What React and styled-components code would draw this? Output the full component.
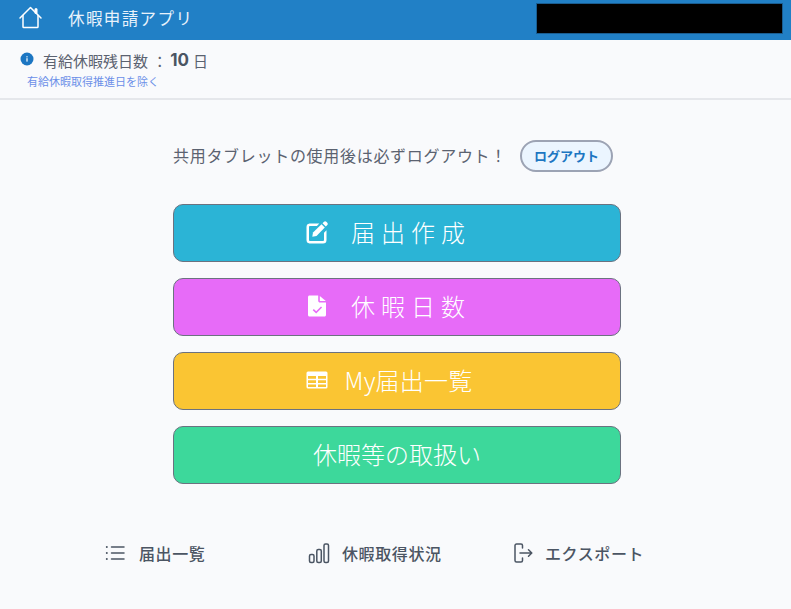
import React from 'react';
import styled, { createGlobalStyle } from 'styled-components';

const GlobalStyle = createGlobalStyle`
  html, body {
    margin: 0;
    padding: 0;
    height: 100%;
    background: #f9fafc;
  }
  body {
    font-family: "Inter", "Noto Sans CJK JP", sans-serif;
    color: #4b5563;
    overflow: hidden;
  }
`;

const Page = styled.div`
  width: 791px;
  height: 609px;
  display: flex;
  flex-direction: column;
`;

const Header = styled.header`
  height: 40px;
  flex: none;
  display: flex;
  align-items: center;
  justify-content: space-between;
  padding: 0 8px 0 18px;
  background: #2180c6;
  box-sizing: border-box;
`;

const Brand = styled.div`
  display: flex;
  align-items: center;
  gap: 25px;
  margin-top: -5px;
`;

const HomeIcon = styled.svg`
  width: 25px;
  height: 25px;
  flex: none;
`;

const Title = styled.span`
  font-size: 16.5px;
  letter-spacing: 1.4px;
  color: #e8f2fb;
`;

const MaskedField = styled.div`
  width: 247px;
  height: 31px;
  margin-top: -3px;
  box-sizing: border-box;
  background: #000;
  border: 1px solid #1a5d90;
`;

const InfoBar = styled.section`
  height: 60px;
  flex: none;
  box-sizing: border-box;
  padding: 10px 20px 0;
  border-bottom: 2px solid #e5e7eb;
`;

const InfoLine = styled.div`
  display: flex;
  align-items: center;
  height: 20px;
  font-size: 15px;
  color: #5b6270;
`;

const InfoIcon = styled.svg`
  width: 14px;
  height: 14px;
  margin-right: 9px;
  margin-top: -2px;
  flex: none;
`;

const Days = styled.strong`
  margin: 0 4px 0 3px;
  font-size: 17px;
  font-weight: 700;
  color: #4b5563;
`;

const InfoNote = styled.div`
  margin: 5px 0 0 7px;
  font-size: 11px;
  line-height: 14px;
  color: #6b8fe8;
`;

const Main = styled.main`
  width: 448px;
  margin: 0 0 0 173px;
  padding-top: 39px;
  display: flex;
  flex-direction: column;
`;

const LogoutRow = styled.div`
  display: flex;
  align-items: center;
  height: 33px;
  margin-bottom: 32px;
  font-size: 16px;
  color: #5b6270;
`;

const LogoutText = styled.span`
  width: 347px;
  flex: none;
  margin-top: -2px;
  letter-spacing: 0.7px;
  white-space: nowrap;
`;

const LogoutButton = styled.button`
  width: 93px;
  height: 32px;
  padding: 0;
  border: 2px solid #9ca3b4;
  border-radius: 16px;
  background: #ebf5ff;
  color: #1c76c2;
  font-family: inherit;
  font-size: 13px;
  font-weight: 700;
`;

const ActionList = styled.div`
  display: flex;
  flex-direction: column;
  gap: 16px;
`;

const ActionButton = styled.button`
  height: 58px;
  box-sizing: border-box;
  display: flex;
  align-items: center;
  justify-content: center;
  gap: ${p => p.$gap}px;
  padding: 0 ${p => p.$shift}px 0 0;
  border: 1px solid #6b7280;
  border-radius: 10px;
  background: ${p => p.$color};
  color: #fff;
  font-family: "Noto Sans CJK JP", sans-serif;
  font-size: 24px;
  font-weight: 300;
  line-height: 34px;
  letter-spacing: ${p => p.$spacing}px;
  white-space: nowrap;
`;

const ActionLabel = styled.span`
  margin-top: -2px;
`;

const ActionIcon = styled.svg`
  width: 24px;
  height: 24px;
  flex: none;
  margin-top: -3px;
`;

const BottomNav = styled.nav`
  width: 560px;
  margin: 57px 0 0 103px;
  display: flex;
`;

const NavItem = styled.a`
  display: flex;
  align-items: center;
  height: 24px;
  width: ${p => p.$width}px;
  flex: none;
  gap: ${p => p.$gap}px;
  font-size: 16px;
  font-weight: 500;
  letter-spacing: 0.6px;
  color: #4b5563;
  white-space: nowrap;
`;

const NavIcon = styled.svg`
  width: 24px;
  height: 24px;
  flex: none;
  fill: none;
  stroke: #4b5563;
  stroke-width: 1.5;
  stroke-linecap: round;
  stroke-linejoin: round;
`;

export default function App() {
  return (
    <Page>
      <GlobalStyle />
      <Header>
        <Brand>
          <HomeIcon viewBox="0 0 25 25" fill="none" stroke="#fff" strokeWidth="1.5" strokeLinecap="round" strokeLinejoin="round">
            <path d="M2 13 12.5 2.5 23 13" />
            <path d="M18 4.5V7.5" strokeWidth="3" />
            <path d="M5 10.5V21.8c0 .5.3.8.8.8h13.4c.5 0 .8-.3.8-.8V10.5" />
          </HomeIcon>
          <Title>休暇申請アプリ</Title>
        </Brand>
        <MaskedField />
      </Header>

      <InfoBar>
        <InfoLine>
          <InfoIcon viewBox="0 0 14 14">
            <circle cx="7" cy="7" r="6.5" fill="#1c76c2" />
            <rect x="6.4" y="6.2" width="1.2" height="3.4" fill="#fff" />
            <rect x="6.4" y="4.2" width="1.2" height="1.2" fill="#fff" />
          </InfoIcon>
          有給休暇残日数 ：
          <Days>10</Days>
          日
        </InfoLine>
        <InfoNote>有給休暇取得推進日を除く</InfoNote>
      </InfoBar>

      <Main>
        <LogoutRow>
          <LogoutText>共用タブレットの使用後は必ずログアウト！</LogoutText>
          <LogoutButton>ログアウト</LogoutButton>
        </LogoutRow>

        <ActionList>
          <ActionButton $color="#2bb4d6" $spacing={6} $gap={22} $shift={18}>
            <ActionIcon viewBox="0 0 24 24" fill="#fff">
              <path d="M19 1.800a1.600 1.600 0 0 1 2.300 0l1 1a1.600 1.600 0 0 1 0 2.300l-1.500 1.500-3.300-3.300z" />
              <path d="M16.500 4.300 19.800 7.600 11.500 15.900 7.300 16.700 8 12.500z" />
              <path d="M4.500 3.500h9.800l-2.400 2.500H5c-.5 0-1 .5-1 1v13c0 .5.500 1 1 1h13c.5 0 1-.5 1-1v-7.300l2.500-2.500V20a3.500 3.500 0 0 1-3.500 3.500H4.500A3.500 3.500 0 0 1 1.500 20V7a3.500 3.500 0 0 1 3-3.500z" />
            </ActionIcon>
            <ActionLabel>届出作成</ActionLabel>
          </ActionButton>
          <ActionButton $color="#e76bf8" $spacing={6} $gap={22} $shift={18}>
            <ActionIcon viewBox="0 0 24 24" fill="#fff">
              <path fillRule="evenodd" d="M4.500 1.500h8.700v5.300c0 1 .8 1.800 1.800 1.800h6v12.400c0 .9-.7 1.500-1.500 1.500h-15C3.700 22.500 3 21.900 3 21V3c0-.9.700-1.500 1.500-1.500zM16 12.500l-4.800 4.800-2.400-2.200-1.100 1.100 3.500 3.300 5.900-5.900z" />
              <path d="M14.800 2 20.800 7h-6z" />
            </ActionIcon>
            <ActionLabel>休暇日数</ActionLabel>
          </ActionButton>
          <ActionButton $color="#fac533" $spacing={0.2} $gap={16} $shift={17}>
            <ActionIcon viewBox="0 0 24 24">
              <path fill="#fff" fillRule="evenodd" d="M3 3.500h18A1.500 1.500 0 0 1 22.500 5v14a1.500 1.500 0 0 1-1.500 1.500H3A1.500 1.500 0 0 1 1.500 19V5A1.500 1.500 0 0 1 3 3.500zM3 8v2.800h8V8zm10 0v2.800h8V8zM3 12.200V15h8v-2.800zm10 0V15h8v-2.800zM3 16.400V19h8v-2.600zm10 0V19h8v-2.600z" />
            </ActionIcon>
            <ActionLabel>My届出一覧</ActionLabel>
          </ActionButton>
          <ActionButton $color="#3dd89b" $spacing={0} $gap={0} $shift={0}>
            <ActionLabel>休暇等の取扱い</ActionLabel>
          </ActionButton>
        </ActionList>
      </Main>

      <BottomNav>
        <NavItem $width={204} $gap={12}>
          <NavIcon viewBox="0 0 24 24">
            <path d="M8.500 6H21M8.500 12H21M8.500 18H21" />
            <path d="M3.800 6h.01M3.800 12h.01M3.800 18h.01" strokeWidth="2" />
          </NavIcon>
          届出一覧
        </NavItem>
        <NavItem $width={204} $gap={11}>
          <NavIcon viewBox="0 0 24 24">
            <rect x="2.500" y="13.500" width="4.500" height="8" rx="1.500" />
            <rect x="9.800" y="8.500" width="4.500" height="13" rx="1.500" />
            <rect x="17" y="3" width="4.500" height="18.500" rx="1.500" />
          </NavIcon>
          休暇取得状況
        </NavItem>
        <NavItem $width={152} $gap={10}>
          <NavIcon viewBox="0 0 24 24">
            <path d="M10 3H5.500A1.500 1.500 0 0 0 4 4.500v15A1.500 1.500 0 0 0 5.500 21H10a1.500 1.500 0 0 0 1.500-1.500V17M11.500 7V4.500A1.500 1.500 0 0 0 10 3" />
            <path d="M9 12h11.500M17.500 8.800 20.800 12l-3.300 3.200" />
          </NavIcon>
          エクスポート
        </NavItem>
      </BottomNav>
    </Page>
  );
}
